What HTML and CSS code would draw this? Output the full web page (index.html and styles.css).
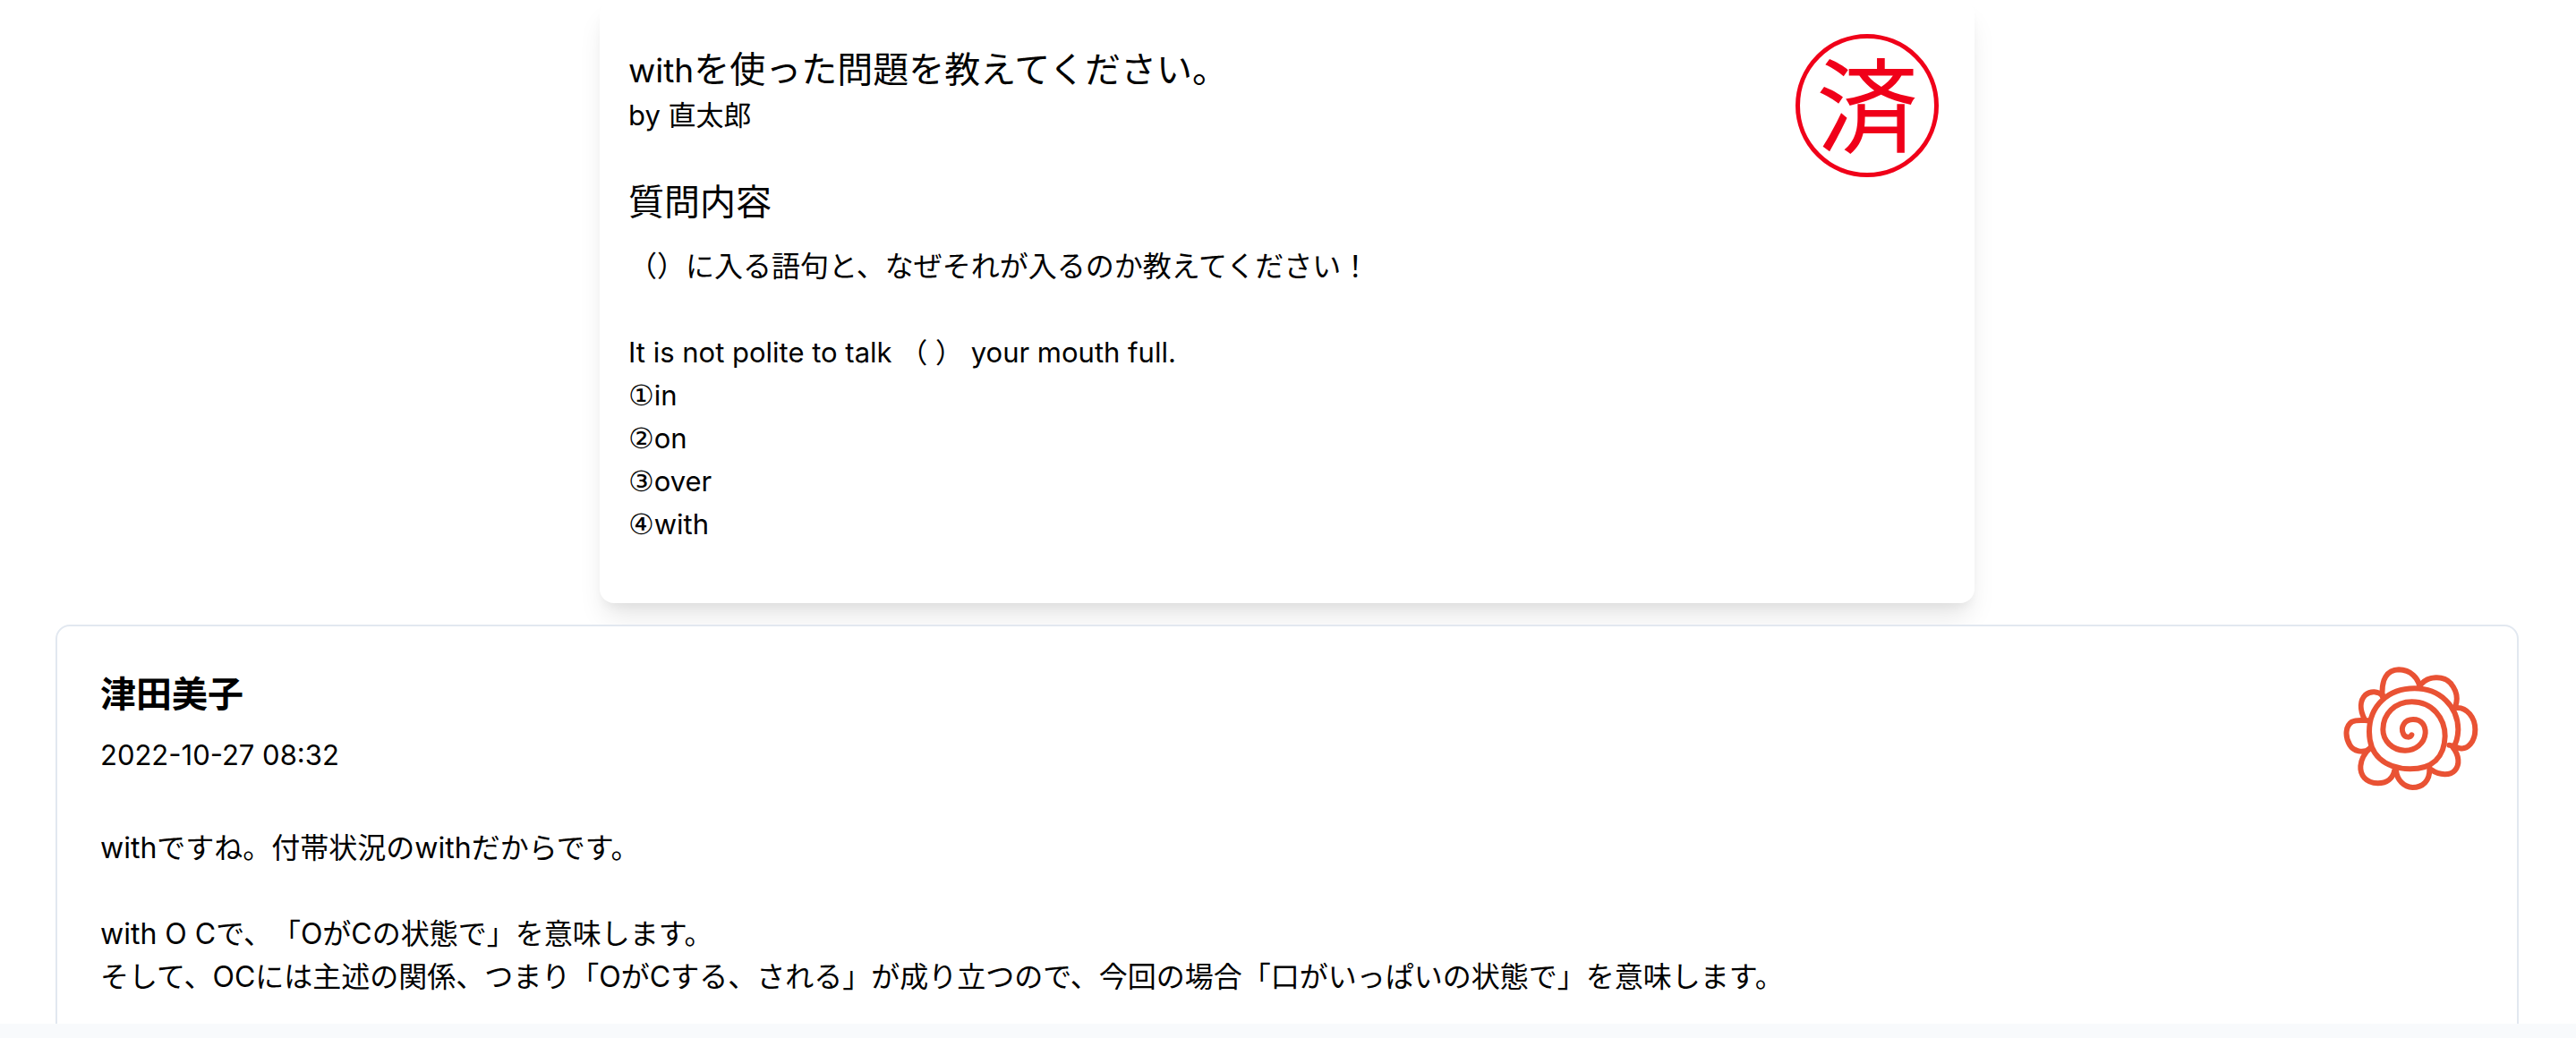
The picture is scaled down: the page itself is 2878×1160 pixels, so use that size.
FILE: index.html
```html
<!DOCTYPE html>
<html lang="ja">
<head>
<meta charset="utf-8">
<title>withを使った問題を教えてください。</title>
<link rel="stylesheet" href="styles.css">
</head>
<body>
<main class="page">
  <article class="question">
    <header class="question-header">
      <div class="question-title">
        <h1 class="title headline"><span class="latin-title">with</span>を使った問題を教えてください。</h1>
        <p class="latin">by 直太郎</p>
      </div>
      <div class="stamp">済</div>
    </header>
    <h2 class="title">質問内容</h2>
    <p class="question-body">（）に入る語句と、なぜそれが入るのか教えてください！

<span class="latin">It is not polite to talk （ ） your mouth full.</span>
<span class="number">①</span><span class="latin">in</span>
<span class="number">②</span><span class="latin">on</span>
<span class="number">③</span><span class="latin">over</span>
<span class="number">④</span><span class="latin">with</span></p>
  </article>
  <article class="answer">
    <header class="answer-header">
      <div class="answer-meta">
        <h2 class="title author">津田美子</h2>
        <time class="latin" datetime="2022-10-27T08:32">2022-10-27 08:32</time>
      </div>
      <svg class="flower" viewBox="116 164 456 420" aria-hidden="true">
        <path d="M345 396C340 407 325 404 318 394C305 368 323 344 350 344C380 344 392 365 391 390C388 425 357 449 322 448C280 447 249 415 249 378C249 325 290 285 346 285C415 285 457 340 457 400C455 470 415 510 340 510C250 508 203 460 203 385C203 300 265 240 355 240C440 240 500 300 501 378C500 405 493 425 485 436"/>
        <path d="M247 266C243 210 262 178 302 177C342 178 368 205 372 236"/>
        <path d="M378 225C400 200 450 195 475 222C495 245 502 270 492 300"/>
        <path d="M497 305C530 304 558 337 558 378C558 420 532 445 508 441C490 437 480 430 471 430"/>
        <path d="M482 436C505 465 507 495 490 515C475 532 440 533 410 512"/>
        <path d="M405 508C407 550 382 572 348 572C320 571 296 548 293 514"/>
        <path d="M288 514C283 541 262 558 232 558C190 556 172 530 174 500C176 475 190 455 205 440"/>
        <path d="M205 442C182 460 150 450 138 430C120 400 124 365 145 352C163 343 182 348 205 348"/>
        <path d="M188 345C170 310 172 280 190 262C208 247 232 249 250 265"/>
      </svg>
    </header>
    <p class="answer-body">withですね。付帯状況のwithだからです。

with O Cで、「OがCの状態で」を意味します。
そして、OCには主述の関係、つまり「OがCする、される」が成り立つので、今回の場合「口がいっぱいの状態で」を意味します。</p>
  </article>
</main>
<footer class="bottom-bar"></footer>
</body>
</html>
```
FILE: styles.css
```css
* {
  box-sizing: border-box;
}

body {
  display: flex;
  flex-direction: column;
  height: 100vh;
  margin: 0;
  background: #fff;
  color: #000;
  font-family: Inter, "Noto Sans CJK JP", sans-serif;
  font-size: 32px;
  line-height: 48px;
  text-spacing-trim: space-all;
}

h1,
h2,
p {
  margin: 0;
}

.page {
  flex: 1;
  min-height: 0;
  overflow: hidden;
  padding: 0 64px 0 62px;
}

.title {
  font-size: 40px;
  font-weight: 400;
  line-height: 56px;
}

.headline {
  line-height: 52px;
}

/* Latin letters run large beside kana, so they are set a little smaller */
.latin-title {
  font-size: 37px;
}

.latin {
  font-size: 31px;
}

.number {
  font-family: "DejaVu Sans", sans-serif;
}

.question {
  max-width: 1536px;
  margin: 0 auto 24px;
  padding: 38px 40px 64px 32px;
  border-radius: 16px;
  background: #fff;
  box-shadow: 0 20px 30px -6px rgba(0, 0, 0, 0.1), 0 8px 12px -4px rgba(0, 0, 0, 0.05);
}

.question-header,
.answer-header {
  display: flex;
  align-items: flex-start;
  justify-content: space-between;
}

.question-title {
  padding-top: 14px;
}

.stamp {
  width: 160px;
  height: 160px;
  flex-shrink: 0;
  border: 5px solid #f00019;
  border-radius: 50%;
  color: #f00019;
  font-family: "Noto Sans CJK JP", sans-serif;
  font-size: 114px;
  line-height: 138px;
  text-align: center;
}

.question-body,
.answer-body {
  white-space: pre-line;
}

.question-body {
  margin-top: 20px;
}

.answer {
  padding: 44px 42px 64px 48px;
  border: 2px solid #e2e8f0;
  border-radius: 16px;
  background: #fff;
  position: relative;
}

.answer-meta {
  display: flex;
  flex-direction: column;
  gap: 16px;
  padding-top: 4px;
}

.author {
  font-weight: 700;
}

.flower {
  width: 152px;
  height: 140px;
  flex-shrink: 0;
  fill: none;
  stroke: #e95234;
  stroke-width: 18;
  stroke-linecap: round;
  stroke-linejoin: round;
}

.answer-body {
  margin-top: 40px;
}

.bottom-bar {
  height: 16px;
  flex-shrink: 0;
  background: #f8fafc;
}
```
